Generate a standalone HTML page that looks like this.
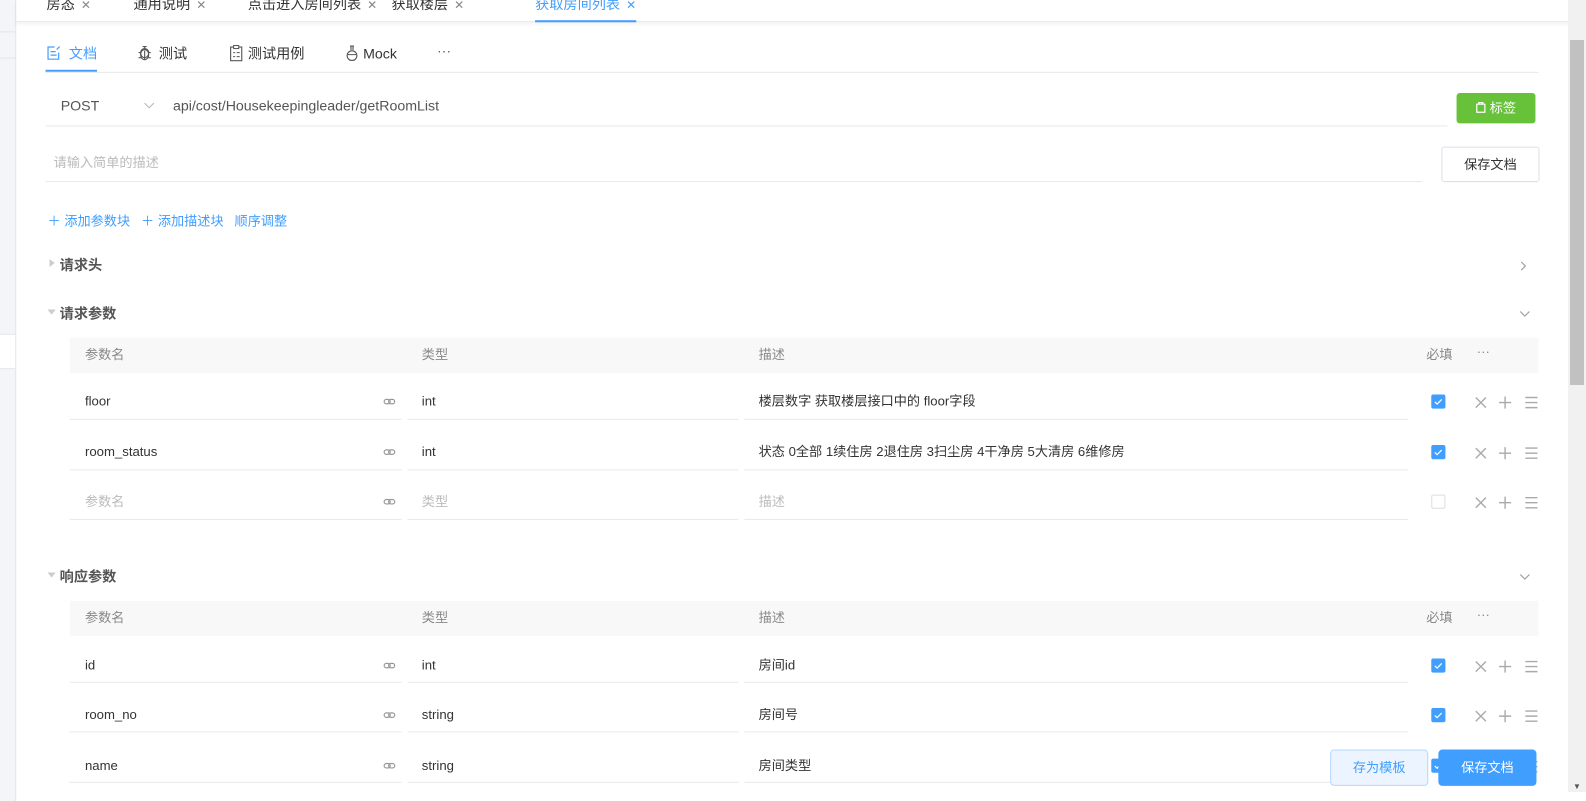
<!DOCTYPE html>
<html><head><meta charset="utf-8"><style>
*{box-sizing:border-box;margin:0;padding:0}
body{width:1586px;height:792px;overflow:hidden;background:#fff;font-family:"Liberation Sans","Noto Sans CJK SC",sans-serif;font-size:13px;color:#333;position:relative;line-height:16px}
#w{position:absolute;left:0;top:0;width:1568px;height:792px;transform:scale(1.0115);transform-origin:0 0}
.a{position:absolute;white-space:nowrap}
.side{left:0;top:0;width:16px;height:792px;background:#f3f5f8;border-right:1px solid #e3e5e8}
.tabs{left:16px;top:0;width:1552px;height:22px;border-bottom:1px solid #e6e6e6;box-shadow:0 2px 4px rgba(0,0,0,.05)}
.t{top:-4px;font-size:14px;color:#333}
.t i{font-style:normal;color:#888;margin-left:6px;font-size:12px}
.blue{color:#409eff}
.line{background:#e8e8e8;height:1px}
.hd{background:#f8f8f8;height:35px;left:69px;width:1452px}
.h{color:#888}
.cb{width:14px;height:14px;border-radius:2px;background:#409eff}
.cbe{width:14px;height:14px;border-radius:2px;border:1px solid #ddd;background:#fff}
.sec{font-size:14px;color:#555;font-weight:bold}
</style></head><body>
<svg width="0" height="0" style="position:absolute"><defs>
<symbol id="lk" viewBox="0 0 12 12"><rect x="0.8" y="3.8" width="6" height="4.4" rx="2.2" fill="none" stroke="#999" stroke-width="1.2"/><rect x="5.2" y="3.8" width="6" height="4.4" rx="2.2" fill="none" stroke="#999" stroke-width="1.2"/></symbol>
<symbol id="ops" viewBox="0 0 66 14"><path d="M2 2l10 10M12 2L2 12" stroke="#aaa" stroke-width="1.4"/><path d="M31 1v12M25 7h12" stroke="#aaa" stroke-width="1.4"/><path d="M51 2h12M51 7h12M51 12h12" stroke="#aaa" stroke-width="1.4"/></symbol>
<symbol id="ck" viewBox="0 0 14 14"><path d="M3.5 7.3l2.3 2.2 4.5-4.6" fill="none" stroke="#fff" stroke-width="1.2"/></symbol>
</defs></svg>
<div id="w">
<div class="a side"></div>
<div class="a" style="left:0;top:31px;width:15px;height:1px;background:#e3e5e8"></div>
<div class="a" style="left:0;top:57px;width:15px;height:1px;background:#e3e5e8"></div>
<div class="a" style="left:0;top:330px;width:15px;height:35px;background:#fff;border-top:1px solid #e3e5e8;border-bottom:1px solid #e3e5e8"></div>
<div class="a tabs"></div>
<div class="a t" style="left:46px">房态<i>✕</i></div>
<div class="a t" style="left:132px">通用说明<i>✕</i></div>
<div class="a t" style="left:245px">点击进入房间列表<i>✕</i></div>
<div class="a t" style="left:387px">获取楼层<i>✕</i></div>
<div class="a t blue" style="left:529px">获取房间列表<i style="color:#409eff">✕</i></div>
<div class="a" style="left:529px;top:20px;width:100px;height:2px;background:#409eff"></div>

<svg class="a" style="left:46px;top:45px" width="15" height="15" viewBox="0 0 15 15"><path d="M12 7v6.5H1.5V1.5H8M4 6h5M4 9.5h6M10 4l3-3" fill="none" stroke="#409eff" stroke-width="1.2"/></svg>
<div class="a blue" style="left:68px;top:45px;font-size:14px">文档</div>
<div class="a" style="left:45px;top:69px;width:51px;height:2px;background:#409eff"></div>
<svg class="a" style="left:136px;top:44px" width="14" height="17" viewBox="0 0 14 17"><path d="M5 2h4M7 2v2M3 8a4 5 0 0 0 8 0a4 4 0 0 0-8 0zM1 8h2M11 8h2M1 13h2.5M10.5 13h2.5M7 6v9" fill="none" stroke="#555" stroke-width="1.1"/><ellipse cx="7" cy="10" rx="4" ry="5" fill="none" stroke="#555" stroke-width="1.1"/></svg>
<div class="a" style="left:157px;top:45px;font-size:14px">测试</div>
<svg class="a" style="left:227px;top:44px" width="13" height="17" viewBox="0 0 13 17"><rect x="1" y="2.5" width="11" height="13.5" fill="none" stroke="#555" stroke-width="1.1"/><rect x="4" y="1" width="5" height="3" fill="#fff" stroke="#555" stroke-width="1"/><path d="M3.5 8h2M7 8h3M3.5 12h2M7 12h3" stroke="#555"/></svg>
<div class="a" style="left:245px;top:45px;font-size:14px">测试用例</div>
<svg class="a" style="left:342px;top:44px" width="12" height="17" viewBox="0 0 12 17"><path d="M4 1.5h4M5 1.5v4M7 1.5v4" fill="none" stroke="#555" stroke-width="1.1"/><circle cx="6" cy="11" r="4.8" fill="none" stroke="#555" stroke-width="1.1"/><path d="M2 10h8" stroke="#555"/></svg>
<div class="a" style="left:359px;top:45px;font-size:14px">Mock</div>
<div class="a" style="left:432px;top:42px;font-size:14px;color:#666">···</div>
<div class="a line" style="left:45px;top:71px;width:1476px"></div>

<div class="a" style="left:60px;top:96px;font-size:14px;color:#555">POST</div>
<svg class="a" style="left:142px;top:101px" width="11" height="7" viewBox="0 0 11 7"><path d="M1 1l4.5 4.5L10 1" fill="none" stroke="#bbb" stroke-width="1.1"/></svg>
<div class="a" style="left:171px;top:96px;font-size:14px;color:#555">api/cost/Housekeepingleader/getRoomList</div>
<div class="a line" style="left:45px;top:124px;width:1386px"></div>
<div class="a" style="left:1440px;top:92px;width:78px;height:30px;background:#67c23a;border-radius:3px;color:#fff;font-size:13px;text-align:center;line-height:30px"><svg width="10" height="12" viewBox="0 0 10 12" style="vertical-align:-1px"><path d="M1 3h8v8H1zM3 3V1.5h4V3" fill="none" stroke="#fff" stroke-width="1.2"/></svg> 标签</div>

<div class="a" style="left:53px;top:153px;font-size:13px;color:#bbb">请输入简单的描述</div>
<div class="a line" style="left:45px;top:179px;width:1361px"></div>
<div class="a" style="left:1425px;top:145px;width:97px;height:35px;border:1px solid #dcdfe6;border-radius:3px;text-align:center;line-height:33px;font-size:13px">保存文档</div>

<div class="a blue" style="left:47px;top:211px;font-size:13px">＋ 添加参数块 &nbsp; ＋ 添加描述块 &nbsp; 顺序调整</div>
<div class="a" style="left:49px;top:256px;width:0;height:0;border-left:5px solid #ccc;border-top:4px solid transparent;border-bottom:4px solid transparent"></div>
<div class="a sec" style="left:59px;top:254px">请求头</div>
<svg class="a" style="left:1503px;top:258px" width="6" height="10" viewBox="0 0 6 10"><path d="M1 1l4 4-4 4" fill="none" stroke="#999" stroke-width="1.1"/></svg>
<div class="a" style="left:47px;top:306px;width:0;height:0;border-top:5px solid #ccc;border-left:4px solid transparent;border-right:4px solid transparent"></div>
<div class="a sec" style="left:59px;top:302px">请求参数</div>
<svg class="a" style="left:1502px;top:307px" width="11" height="7" viewBox="0 0 11 7"><path d="M1 1l4.5 4.5L10 1" fill="none" stroke="#999" stroke-width="1.1"/></svg>

<div class="a hd" style="top:334px"></div>
<div class="a h" style="left:84px;top:343px">参数名</div>
<div class="a h" style="left:417px;top:343px">类型</div>
<div class="a h" style="left:750px;top:343px">描述</div>
<div class="a h" style="left:1410px;top:343px">必填</div>
<div class="a h" style="left:1460px;top:340px">···</div>

<div class="a" style="left:84px;top:389px">floor</div><svg class="a" style="left:379px;top:391px" width="12" height="12"><use href="#lk"/></svg><div class="a" style="left:417px;top:389px">int</div><div class="a" style="left:750px;top:389px">楼层数字 获取楼层接口中的 floor字段</div>
<div class="a line" style="left:69px;top:414px;width:328px"></div><div class="a line" style="left:403px;top:414px;width:327px"></div><div class="a line" style="left:736px;top:414px;width:656px"></div>
<svg class="a cb" style="left:1415px;top:390px" width="14" height="14"><use href="#ck"/></svg><svg class="a" style="left:1457px;top:391px" width="66" height="14"><use href="#ops"/></svg>

<div class="a" style="left:84px;top:439px">room_status</div><svg class="a" style="left:379px;top:441px" width="12" height="12"><use href="#lk"/></svg><div class="a" style="left:417px;top:439px">int</div><div class="a" style="left:750px;top:439px">状态 0全部 1续住房 2退住房 3扫尘房 4干净房 5大清房 6维修房</div>
<div class="a line" style="left:69px;top:464px;width:328px"></div><div class="a line" style="left:403px;top:464px;width:327px"></div><div class="a line" style="left:736px;top:464px;width:656px"></div>
<svg class="a cb" style="left:1415px;top:440px" width="14" height="14"><use href="#ck"/></svg><svg class="a" style="left:1457px;top:441px" width="66" height="14"><use href="#ops"/></svg>

<div class="a" style="left:84px;top:488px;color:#bbb">参数名</div><svg class="a" style="left:379px;top:490px" width="12" height="12"><use href="#lk"/></svg><div class="a" style="left:417px;top:488px;color:#bbb">类型</div><div class="a" style="left:750px;top:488px;color:#bbb">描述</div>
<div class="a line" style="left:69px;top:513px;width:328px"></div><div class="a line" style="left:403px;top:513px;width:327px"></div><div class="a line" style="left:736px;top:513px;width:656px"></div>
<div class="a cbe" style="left:1415px;top:489px"></div><svg class="a" style="left:1457px;top:490px" width="66" height="14"><use href="#ops"/></svg>

<div class="a" style="left:47px;top:566px;width:0;height:0;border-top:5px solid #ccc;border-left:4px solid transparent;border-right:4px solid transparent"></div>
<div class="a sec" style="left:59px;top:562px">响应参数</div>
<svg class="a" style="left:1502px;top:567px" width="11" height="7" viewBox="0 0 11 7"><path d="M1 1l4.5 4.5L10 1" fill="none" stroke="#999" stroke-width="1.1"/></svg>
<div class="a hd" style="top:594px"></div>
<div class="a h" style="left:84px;top:603px">参数名</div>
<div class="a h" style="left:417px;top:603px">类型</div>
<div class="a h" style="left:750px;top:603px">描述</div>
<div class="a h" style="left:1410px;top:603px">必填</div>
<div class="a h" style="left:1460px;top:600px">···</div>

<div class="a" style="left:84px;top:650px">id</div><svg class="a" style="left:379px;top:652px" width="12" height="12"><use href="#lk"/></svg><div class="a" style="left:417px;top:650px">int</div><div class="a" style="left:750px;top:650px">房间id</div>
<div class="a line" style="left:69px;top:674px;width:328px"></div><div class="a line" style="left:403px;top:674px;width:327px"></div><div class="a line" style="left:736px;top:674px;width:656px"></div>
<svg class="a cb" style="left:1415px;top:651px" width="14" height="14"><use href="#ck"/></svg><svg class="a" style="left:1457px;top:652px" width="66" height="14"><use href="#ops"/></svg>

<div class="a" style="left:84px;top:699px">room_no</div><svg class="a" style="left:379px;top:701px" width="12" height="12"><use href="#lk"/></svg><div class="a" style="left:417px;top:699px">string</div><div class="a" style="left:750px;top:699px">房间号</div>
<div class="a line" style="left:69px;top:723px;width:328px"></div><div class="a line" style="left:403px;top:723px;width:327px"></div><div class="a line" style="left:736px;top:723px;width:656px"></div>
<svg class="a cb" style="left:1415px;top:700px" width="14" height="14"><use href="#ck"/></svg><svg class="a" style="left:1457px;top:701px" width="66" height="14"><use href="#ops"/></svg>

<div class="a" style="left:84px;top:749px">name</div><svg class="a" style="left:379px;top:751px" width="12" height="12"><use href="#lk"/></svg><div class="a" style="left:417px;top:749px">string</div><div class="a" style="left:750px;top:749px">房间类型</div>
<div class="a line" style="left:69px;top:773px;width:328px"></div><div class="a line" style="left:403px;top:773px;width:327px"></div><div class="a line" style="left:736px;top:773px;width:656px"></div>
<svg class="a cb" style="left:1415px;top:750px" width="14" height="14"><use href="#ck"/></svg><svg class="a" style="left:1457px;top:751px" width="66" height="14"><use href="#ops"/></svg>

<div class="a" style="left:1315px;top:741px;width:97px;height:36px;background:#ecf5ff;border:1px solid #b3d8ff;border-radius:4px;color:#409eff;text-align:center;line-height:34px">存为模板</div>
<div class="a" style="left:1422px;top:741px;width:97px;height:36px;background:#409eff;border-radius:4px;color:#fff;text-align:center;line-height:36px">保存文档</div>
</div>
<div class="a" style="left:1568px;top:0;width:18px;height:792px;background:#f1f1f1"></div>
<div class="a" style="left:1570px;top:40px;width:14px;height:345px;background:#c1c1c1"></div>
<div class="a" style="left:1573px;top:779px;font-size:8px;color:#555">▼</div>
</body></html>
